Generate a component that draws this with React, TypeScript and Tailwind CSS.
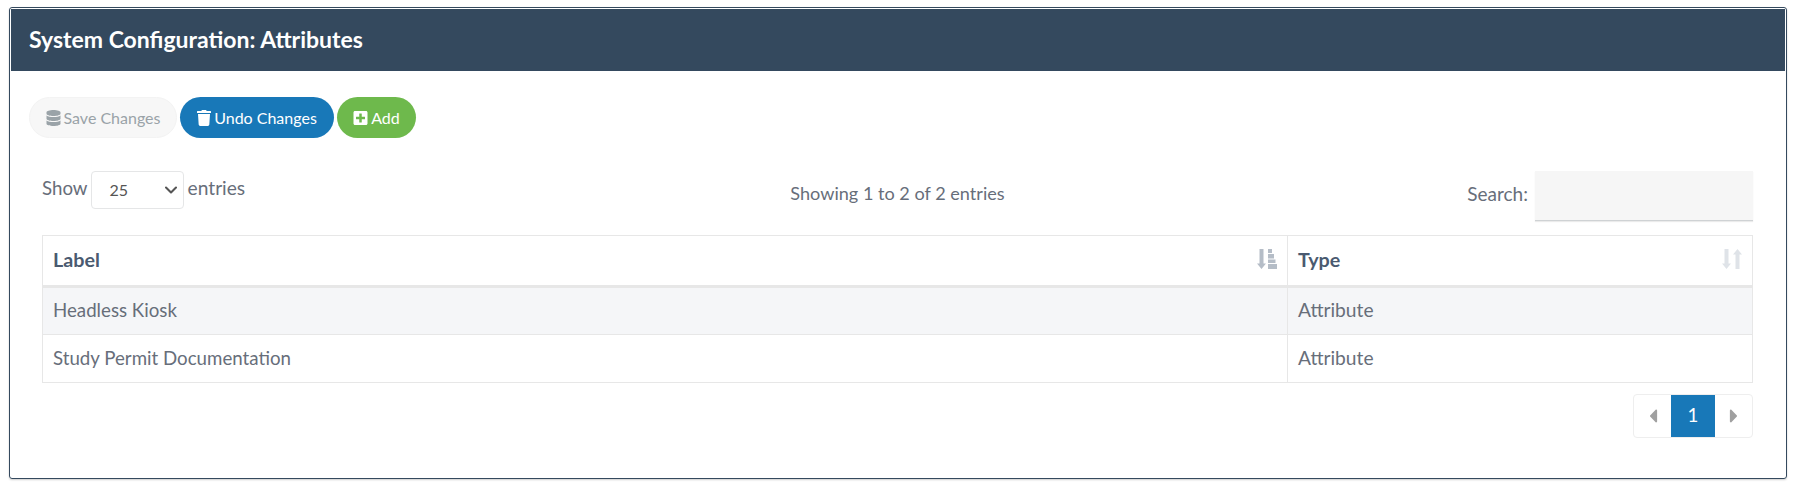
import { FaCaretLeft, FaCaretRight, FaDatabase, FaPlusSquare, FaTrash } from 'react-icons/fa';
import { ChevronDown } from 'lucide-react';

const rows = [
    { label: 'Headless Kiosk', type: 'Attribute' },
    { label: 'Study Permit Documentation', type: 'Attribute' },
];

function SortBoth() {
    return (
        <svg viewBox="0 0 20 20" className="h-[20px] w-[20px] fill-[#dfe3e8]">
            <path d="M2.5 0h4v14.5H9L4.5 20 0 14.5h2.5zM13.5 5.5H11L15.5 0 20 5.5h-2.5V20h-4z" />
        </svg>
    );
}

function SortAsc() {
    return (
        <svg viewBox="0 0 20 20" className="h-[20px] w-[20px] fill-[#b5bdc7]">
            <path d="M2.5 0h4v14.5H9L4.5 20 0 14.5h2.5zM11 0h4v4h-4zM11 5h6v4.500h-6zM11 10.500h7.500V14H11zM11 15h9v5h-9z" />
        </svg>
    );
}

export default function App() {
    return (
        <div className="min-h-[491px] bg-white pt-[7px] pl-[9px] font-['Lato',sans-serif]">
            <div className="h-[472px] w-[1778px] overflow-hidden rounded-[3px] border border-[#34495e] p-px shadow-[0_1px_2px_rgba(0,0,0,0.2)]">
                {/* Title bar */}
                <div className="flex h-[62px] items-center bg-[#34495e] pb-[2px] pl-[18px] text-[23px] font-bold text-white">
                    System Configuration: Attributes
                </div>

                {/* Toolbar */}
                <div className="flex gap-[3px] pt-[26px] pl-[18px] text-[16px]">
                    <button className="flex h-[41px] w-[148px] items-center justify-center gap-[3px] rounded-full border border-[#f3f3f3] bg-[#f7f7f7] text-[#9aa3a8]">
                        <FaDatabase className="h-[16px] w-[15px] text-[#9aa3a8]" />
                        Save Changes
                    </button>
                    <button className="flex h-[41px] w-[154px] items-center justify-center gap-[3px] rounded-full bg-[#1878b8] text-white">
                        <FaTrash className="h-[16px] w-[14px]" />
                        Undo Changes
                    </button>
                    <button className="flex h-[41px] w-[79px] items-center justify-center gap-[3px] rounded-full bg-[#6eb94c] text-white">
                        <FaPlusSquare className="h-[16px] w-[15px]" />
                        Add
                    </button>
                </div>

                <div className="pr-[32px] pl-[31px] text-[18.7px] text-[#676e7a]">
                    {/* Length, info and search */}
                    <div className="mt-[33px] grid h-[50px] grid-cols-3">
                        <div className="flex items-start">
                            <span className="mt-[3px]">Show</span>
                            <div className="mr-[4px] ml-[3px] flex h-[38px] w-[93px] items-center justify-between rounded-[4px] border border-[#e5e6e7] pr-[2px] pl-[18px] text-[16px] text-[#555]">
                                25
                                <ChevronDown className="h-[20px] w-[20px]" strokeWidth={2.5} />
                            </div>
                            <span className="mt-[3px] text-[19.2px]">entries</span>
                        </div>
                        <div className="pt-[9px] text-center text-[18.1px]">Showing 1 to 2 of 2 entries</div>
                        <div className="flex items-start justify-end">
                            <span className="mt-[9px] mr-[7px] text-[19px]">Search:</span>
                            <div className="h-[50px] w-[218px] border-b border-[#cfd2d4] bg-[#f6f6f6] shadow-[0_1px_1px_rgba(0,0,0,0.08)]" />
                        </div>
                    </div>

                    {/* Table */}
                    <table className="mt-[14px] w-[1711px] table-fixed border-collapse">
                        <thead>
                            <tr className="h-[51px] border-b-[3px] border-[#e7e7e7] text-left text-[19.7px] font-bold text-[#4a5a70]">
                                <th className="w-[1245px] border border-b-[3px] border-[#e7e7e7] px-[10px] pb-[2px]">
                                    <div className="flex items-center justify-between">
                                        Label
                                        <SortAsc />
                                    </div>
                                </th>
                                <th className="border border-b-[3px] border-[#e7e7e7] px-[10px] pb-[2px]">
                                    <div className="flex items-center justify-between">
                                        Type
                                        <SortBoth />
                                    </div>
                                </th>
                            </tr>
                        </thead>
                        <tbody>
                            {rows.map((row) => (
                                <tr key={row.label} className="h-[48px] first:bg-[#f5f6f8]">
                                    <td className="border border-[#e7e7e7] px-[10px] pb-[1px]">{row.label}</td>
                                    <td className="border border-[#e7e7e7] px-[10px] pb-[1px] text-[19.2px]">{row.type}</td>
                                </tr>
                            ))}
                        </tbody>
                    </table>

                    {/* Pagination */}
                    <div className="mt-[11px] flex justify-end">
                        <div className="flex h-[44px] w-[120px] overflow-hidden rounded-[4px] border border-[#eeeeee]">
                            <div className="flex flex-1 items-center justify-center text-[#a0a0a0]">
                                <FaCaretLeft className="h-[22px] w-[22px]" />
                            </div>
                            <div className="-my-px flex w-[44px] items-center justify-center bg-[#1878b8] pb-[2px] text-white">1</div>
                            <div className="flex flex-1 items-center justify-center text-[#a0a0a0]">
                                <FaCaretRight className="h-[22px] w-[22px]" />
                            </div>
                        </div>
                    </div>
                </div>
            </div>
        </div>
    );
}
